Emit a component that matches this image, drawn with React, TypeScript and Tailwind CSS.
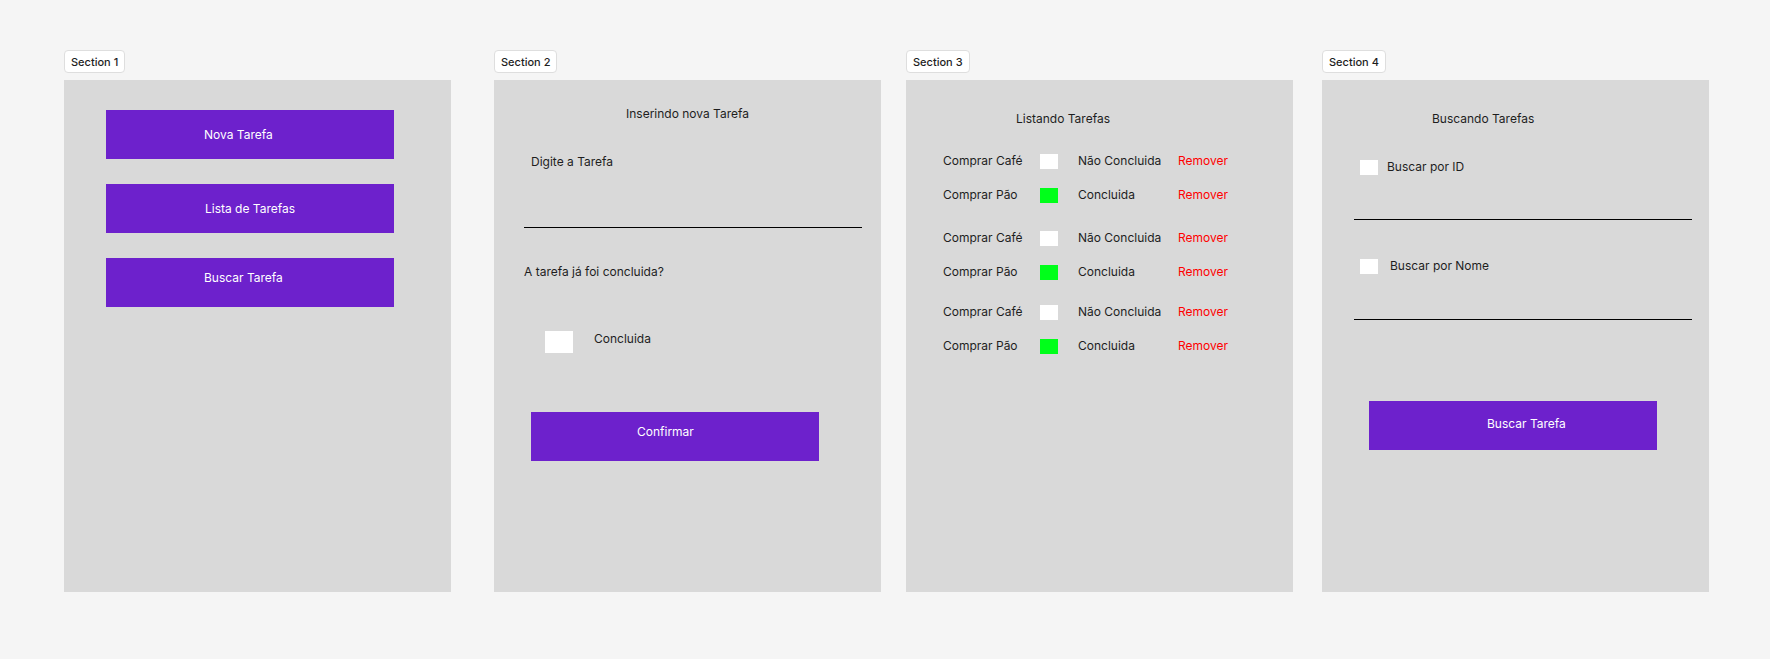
import React from 'react';

const tasks = [
  { name: 'Comprar Café', done: false },
  { name: 'Comprar Pão', done: true },
];

const Section = ({ label, className, children }: { label: string; className: string; children: React.ReactNode }) => (
  <div className={`flex flex-col items-start ${className}`}>
    <div className="h-[23px] px-[6px] flex items-center bg-white border border-[#dedede] rounded-[4px] text-[11px] font-medium text-[#1e1e1e]">
      {label}
    </div>
    <div className="mt-[7px] w-[387px] h-[512px] bg-[#d9d9d9] flex flex-col items-start">{children}</div>
  </div>
);

const TaskRow = ({ name, done }: { name: string; done: boolean }) => (
  <div className="flex items-center h-[34px] pl-[37px]">
    <span className="w-[97px]">{name}</span>
    <div className={`w-[18px] h-[15px] ${done ? 'bg-[#00ff1a]' : 'bg-white'}`}></div>
    <span className="ml-[20px] w-[100px]">{done ? 'Concluida' : 'Não Concluida'}</span>
    <span className="text-[#ff0000]">Remover</span>
  </div>
);

const App = () => {
  return (
    <div className="h-[659px] w-full bg-[#f5f5f5] font-['Inter',sans-serif] text-[12px] leading-4 text-[#1e1e1e] overflow-hidden">
      <div className="flex items-start pt-[50px]">
        {/* Section 1 - menu */}
        <Section label="Section 1" className="ml-[64px]">
          <div className="pt-[30px] pl-[42px] flex flex-col gap-[25px]">
            <button className="w-[288px] h-[49px] bg-[#6d21cc] text-white flex items-center pl-[98px]">Nova Tarefa</button>
            <button className="w-[288px] h-[49px] bg-[#6d21cc] text-white flex items-center pl-[99px]">Lista de Tarefas</button>
            <button className="w-[288px] h-[49px] bg-[#6d21cc] text-white flex items-center pl-[98px] pb-[10px]">Buscar Tarefa</button>
          </div>
        </Section>

        {/* Section 2 - new task */}
        <Section label="Section 2" className="ml-[43px]">
          <p className="mt-[26px] ml-[132px]">Inserindo nova Tarefa</p>
          <p className="mt-[32px] ml-[37px]">Digite a Tarefa</p>
          <div className="mt-[57px] ml-[30px] w-[338px] h-px bg-black"></div>
          <p className="mt-[36px] ml-[30px]">A tarefa já foi concluida?</p>
          <div className="mt-[51px] ml-[51px] flex items-start">
            <div className="w-[28px] h-[22px] bg-white"></div>
            <span className="ml-[21px]">Concluida</span>
          </div>
          <button className="mt-[59px] ml-[37px] w-[288px] h-[49px] bg-[#6d21cc] text-white flex items-start pt-[12px] pl-[106px]">
            Confirmar
          </button>
        </Section>

        {/* Section 3 - list */}
        <Section label="Section 3" className="ml-[25px]">
          <p className="mt-[31px] ml-[110px]">Listando Tarefas</p>
          <div className="mt-[17px]">
            {tasks.map((t) => <TaskRow key={t.name} {...t} />)}
          </div>
          <div className="mt-[9px]">
            {tasks.map((t) => <TaskRow key={t.name} {...t} />)}
          </div>
          <div className="mt-[6px]">
            {tasks.map((t) => <TaskRow key={t.name} {...t} />)}
          </div>
        </Section>

        {/* Section 4 - search */}
        <Section label="Section 4" className="ml-[29px]">
          <p className="mt-[31px] ml-[110px]">Buscando Tarefas</p>
          <div className="mt-[32px] ml-[38px] flex items-center">
            <div className="w-[18px] h-[15px] bg-white"></div>
            <span className="ml-[9px]">Buscar por ID</span>
          </div>
          <div className="mt-[44px] ml-[32px] w-[338px] h-px bg-black"></div>
          <div className="mt-[38px] ml-[38px] flex items-center">
            <div className="w-[18px] h-[15px] bg-white"></div>
            <span className="ml-[12px]">Buscar por Nome</span>
          </div>
          <div className="mt-[45px] ml-[32px] w-[338px] h-px bg-black"></div>
          <button className="mt-[81px] ml-[47px] w-[288px] h-[49px] bg-[#6d21cc] text-white flex items-start pt-[15px] pl-[118px]">
            Buscar Tarefa
          </button>
        </Section>
      </div>
    </div>
  );
};

export default App;
